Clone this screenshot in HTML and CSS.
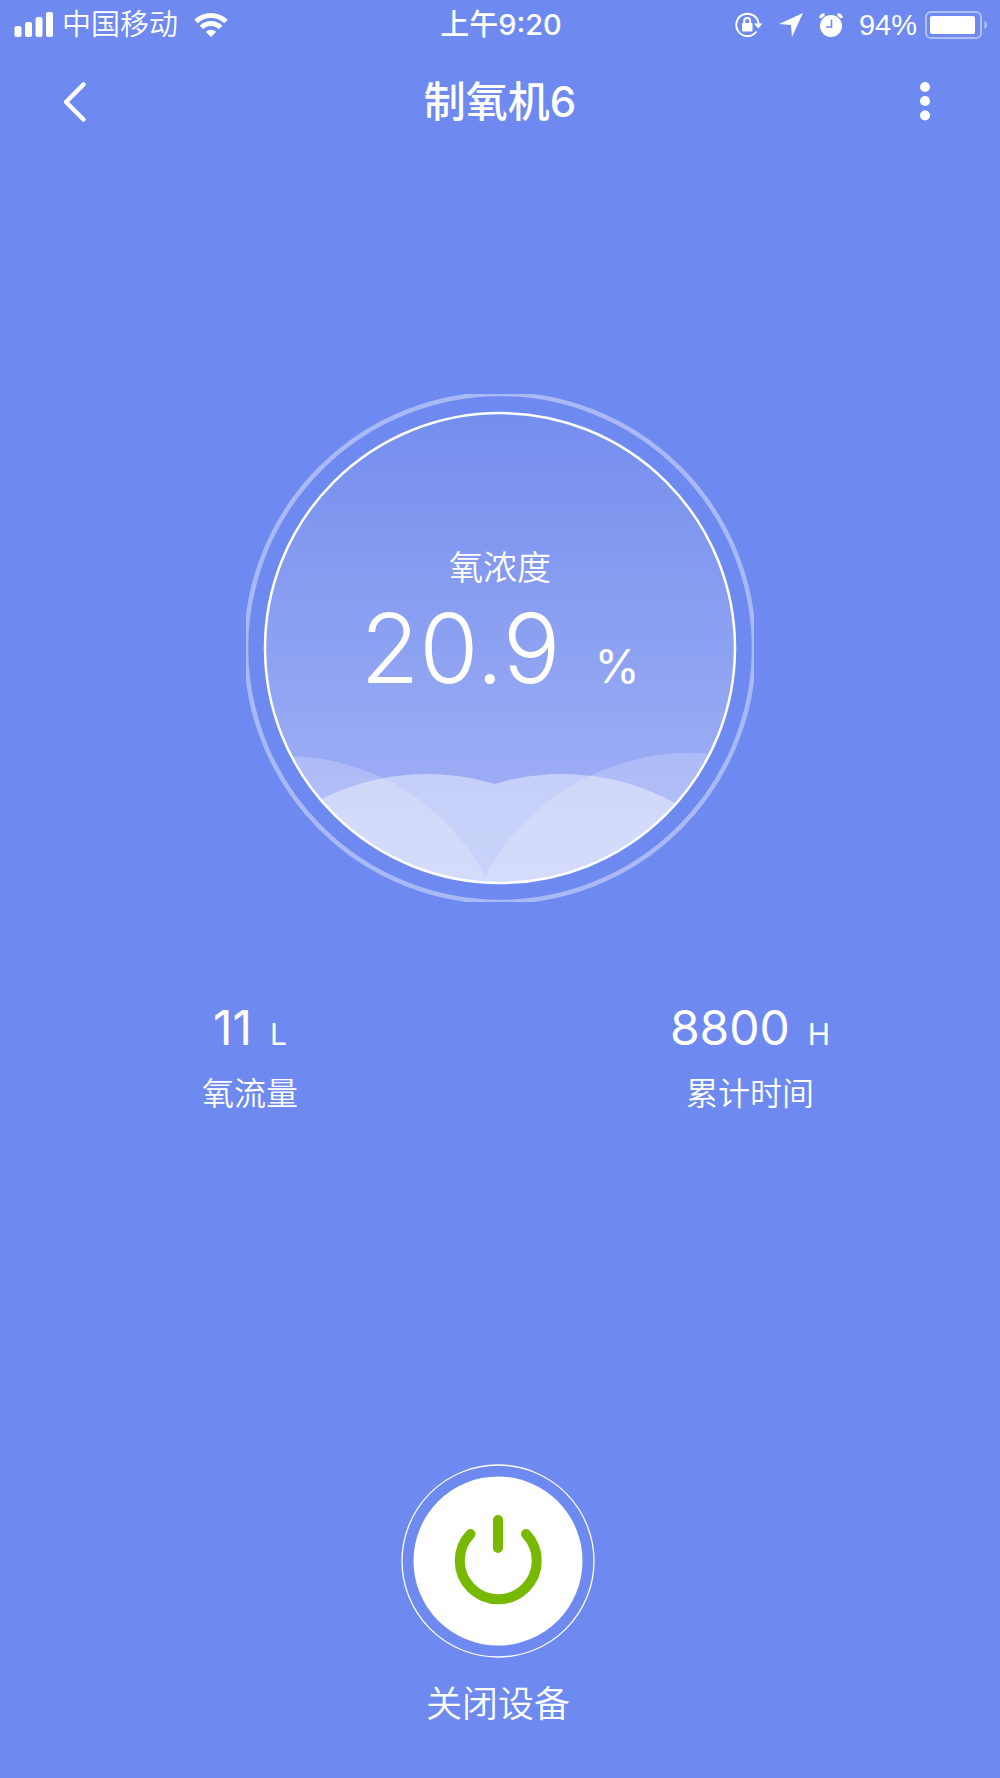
FILE: index.html
```
<!DOCTYPE html>
<html lang="zh-CN">
<head>
<meta charset="UTF-8">
<meta name="viewport" content="width=device-width, initial-scale=1">
<title>制氧机6</title>
<link rel="stylesheet" href="styles.css">
</head>
<body>
<header>
    <div class="status">
        <div class="status-left">
            <svg width="40" height="26" viewBox="0 0 40 26" fill="#fff">
                <rect x="0.500" y="14" width="7" height="11" rx="2"/>
                <rect x="11" y="10" width="7" height="15" rx="2"/>
                <rect x="21.500" y="5" width="7" height="20" rx="2"/>
                <rect x="32" y="0" width="7" height="25" rx="2"/>
            </svg>
            <span class="carrier">中国移动</span>
            <svg class="wifi" width="34" height="26" viewBox="0 0 34 26" fill="none" stroke="#fff" stroke-width="5">
                <path d="M2 9.500a21.500 21.500 0 0 1 30 0"/>
                <path d="M7.500 15.500a13.500 13.500 0 0 1 19 0"/>
                <path d="M17 25l-5.200-5.200q5.200-4.200 10.400 0z" fill="#fff" stroke="none"/>
            </svg>
        </div>
        <span class="time">上午9:20</span>
        <div class="status-right">
            <svg width="28" height="26" viewBox="0 0 28 26" fill="none" stroke="#fff" stroke-width="2">
                <path d="M21.500 19.500A11.200 11.200 0 1 1 23.600 12"/>
                <path d="M19 11.500h8.500l-4.300 5z" fill="#fff" stroke="none"/>
                <rect x="7" y="11" width="10.500" height="8.500" rx="1" fill="#fff" stroke="none"/>
                <path d="M9.200 12V9a3 3 0 0 1 6 0v3"/>
            </svg>
            <svg width="24" height="24" viewBox="0 0 24 24" fill="#fff"><path d="M24 0L13 24l-1-12L0 11z"/></svg>
            <svg width="24" height="24" viewBox="0 0 24 24">
                <path d="M1.500 5q.5-3 4-3.500M18.500 1.500q3.500.5 4 3.500" fill="none" stroke="#fff" stroke-width="3"/>
                <circle cx="12" cy="13" r="11" fill="#fff"/>
                <path d="M12.500 6.500v7.500h-5.500" fill="none" stroke="#6e8af0" stroke-width="1.600"/>
            </svg>
            <span class="percent">94%</span>
            <svg class="battery" width="63" height="28" viewBox="0 0 63 28">
                <rect x="1" y="1" width="55" height="26" rx="5" fill="none" stroke="#fff" stroke-opacity=".45" stroke-width="2"/>
                <rect x="5" y="5" width="45" height="18" rx="2" fill="#fff"/>
                <path d="M59.500 9.500q5 4.500 0 9z" fill="#fff" fill-opacity=".5"/>
            </svg>
        </div>
    </div>
    <nav>
        <button type="button" class="icon-btn" aria-label="返回">
            <svg width="30" height="44" viewBox="0 0 30 44" fill="none" stroke="#fff" stroke-width="4.500" stroke-linecap="round" stroke-linejoin="round"><path d="M23.500 4.500L6 22l17.500 17.500"/></svg>
        </button>
        <h1>制氧机6</h1>
        <button type="button" class="icon-btn" aria-label="更多">
            <svg width="30" height="44" viewBox="0 0 30 44" fill="#fff"><circle cx="15" cy="7" r="5"/><circle cx="15" cy="21" r="5"/><circle cx="15" cy="35.500" r="5"/></svg>
        </button>
    </nav>
</header>

<main>
    <section class="gauge">
        <svg class="gauge-bg" width="508" height="508" viewBox="0 0 508 508">
            <defs>
                <linearGradient id="sky" x1="0" y1="0" x2="0" y2="1">
                    <stop offset="0" stop-color="#758eee"/>
                    <stop offset="1" stop-color="#a6b5f6"/>
                </linearGradient>
                <clipPath id="ball"><circle cx="254" cy="254" r="235"/></clipPath>
            </defs>
            <circle cx="254" cy="254" r="254" fill="none" stroke="#fff" stroke-opacity=".4" stroke-width="4.500"/>
            <circle cx="254" cy="254" r="235" fill="url(#sky)"/>
            <g clip-path="url(#ball)" fill="#fff">
                <g opacity=".42"><circle cx="181" cy="615" r="235"/><circle cx="316" cy="615" r="235"/></g>
                <g opacity=".2"><circle cx="39" cy="589" r="227"/><circle cx="444" cy="591" r="232"/></g>
            </g>
            <circle cx="254" cy="254" r="235" fill="none" stroke="#fff" stroke-width="2.500"/>
        </svg>
        <div class="gauge-text">
            <span class="gauge-label">氧浓度</span>
            <div class="gauge-value">20.9<span class="gauge-unit">%</span></div>
        </div>
    </section>

    <section class="stats">
        <div class="stat">
            <div class="stat-value">11<span class="stat-unit">L</span></div>
            <div class="stat-label">氧流量</div>
        </div>
        <div class="stat">
            <div class="stat-value">8800<span class="stat-unit">H</span></div>
            <div class="stat-label">累计时间</div>
        </div>
    </section>
</main>

<footer>
    <button type="button" class="power">
        <svg width="194" height="194" viewBox="0 0 194 194" fill="none">
            <circle cx="97" cy="97" r="96" stroke="#fff" stroke-width="1.300"/>
            <circle cx="97" cy="97" r="84.500" fill="#fff"/>
            <g stroke="#76b900" stroke-width="10" stroke-linecap="round">
                <path d="M69.500 70a38.500 38.500 0 1 0 55.500 0"/>
                <path d="M97 56v28"/>
            </g>
        </svg>
        <span>关闭设备</span>
    </button>
</footer>
</body>
</html>
```

FILE: styles.css
```
*{margin:0;padding:0;box-sizing:border-box}
body{
    min-height: 100vh;
    display: flex;
    flex-direction: column;
    background: #6e8af0;
    color: #fff;
    font-family: Inter, "Noto Sans CJK SC", sans-serif;
    font-weight: 350;
}
svg{display: block;flex: none;}
button{border: 0;background: none;color: inherit;font: inherit;cursor: pointer;}

.status{
    display: grid;
    grid-template-columns: 1fr auto 1fr;
    align-items: center;
    height: 50px;
    padding: 0 12px 0 14px;
    font-size: 29px;
    line-height: 50px;
}
.status-left,.status-right{display: flex;align-items: center;}
.status-right{justify-content: flex-end;gap: 16px;}
.carrier{margin-left: 8px;}
.wifi{margin-left: 16px;}
.time{font-weight: 500;}
.percent{font-family: "Liberation Sans", sans-serif;}
.battery{margin-left: -8px;}

nav{
    display: flex;
    align-items: center;
    justify-content: space-between;
    height: 104px;
    padding: 0 60px;
}
.icon-btn{width: 30px;height: 44px;}
h1{font-size: 42px;font-weight: 500;line-height: 60px;}

.gauge{display: grid;justify-content: center;margin-top: 240px;}
.gauge-bg,.gauge-text{grid-area: 1 / 1;}
.gauge-text{
    display: flex;
    flex-direction: column;
    align-items: center;
    padding-top: 150px;
}
.gauge-label{font-size: 34px;line-height: 48px;}
.gauge-value{font-size: 96px;font-weight: 300;line-height: 112px;}
.gauge-unit{margin-left: 34px;font-size: 46px;font-weight: 400;}

.stats{
    display: grid;
    grid-template-columns: 1fr 1fr;
    margin-top: 96px;
    text-align: center;
}
.stat-value{font-size: 48px;font-weight: 400;line-height: 60px;}
.stat-unit{margin-left: 18px;font-size: 30px;}
.stat-label{margin-top: 6px;font-size: 32px;line-height: 48px;}

footer{margin-top: auto;padding: 0 4px 48px 0;text-align: center;}
.power{
    display: inline-flex;
    flex-direction: column;
    align-items: center;
    gap: 20px;
    font-size: 36px;
    line-height: 52px;
}
```
